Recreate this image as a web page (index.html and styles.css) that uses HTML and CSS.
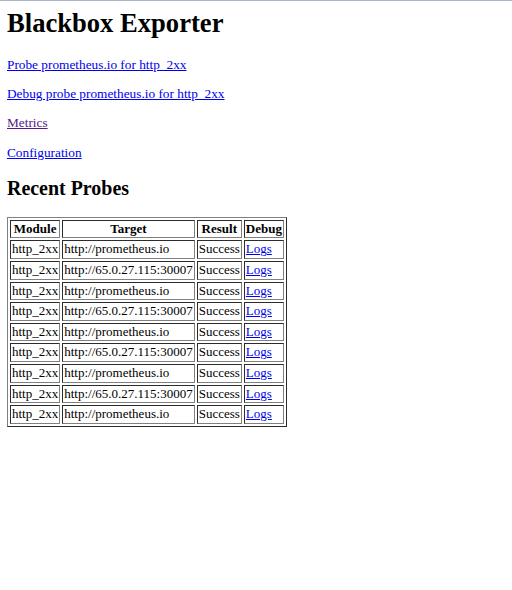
FILE: index.html
```html
<!DOCTYPE html>
<html>
<head>
<meta charset="utf-8">
<title>Blackbox Exporter</title>
<link rel="stylesheet" href="styles.css">
</head>
<body class="page">
<h1 class="title">Blackbox Exporter</h1>
<p class="nav"><a class="link" href="#probe">Probe prometheus.io for http_2xx</a></p>
<p class="nav"><a class="link" href="#debug">Debug probe prometheus.io for http_2xx</a></p>
<p class="nav"><a class="link visited" href="#metrics">Metrics</a></p>
<p class="nav"><a class="link" href="#config">Configuration</a></p>
<h2 class="subtitle">Recent Probes</h2>
<table class="probes" border="1">
<tr><th>Module</th><th>Target</th><th>Result</th><th>Debug</th></tr>
<tr><td>http_2xx</td><td>http://prometheus.io</td><td>Success</td><td><a class="link" href="#l1">Logs</a></td></tr>
<tr><td>http_2xx</td><td>http://65.0.27.115:30007</td><td>Success</td><td><a class="link" href="#l2">Logs</a></td></tr>
<tr><td>http_2xx</td><td>http://prometheus.io</td><td>Success</td><td><a class="link" href="#l3">Logs</a></td></tr>
<tr><td>http_2xx</td><td>http://65.0.27.115:30007</td><td>Success</td><td><a class="link" href="#l4">Logs</a></td></tr>
<tr><td>http_2xx</td><td>http://prometheus.io</td><td>Success</td><td><a class="link" href="#l5">Logs</a></td></tr>
<tr><td>http_2xx</td><td>http://65.0.27.115:30007</td><td>Success</td><td><a class="link" href="#l6">Logs</a></td></tr>
<tr><td>http_2xx</td><td>http://prometheus.io</td><td>Success</td><td><a class="link" href="#l7">Logs</a></td></tr>
<tr><td>http_2xx</td><td>http://65.0.27.115:30007</td><td>Success</td><td><a class="link" href="#l8">Logs</a></td></tr>
<tr><td>http_2xx</td><td>http://prometheus.io</td><td>Success</td><td><a class="link" href="#l9">Logs</a></td></tr>
</table>
</body>
</html>
```

FILE: styles.css
```css
html {
  border-top: 1px solid #aab4cc;
}
.page {
  margin: 7px;
  font-family: "Liberation Serif", serif;
  font-size: 13.3px;
  color: #000;
  background: #fff;
}
.title {
  margin-top: 0;
}
.probes {
  font-size: 13px;
  line-height: 14.6px;
}
.link {
  color: #0000ee;
}
.visited {
  color: #551a8b;
}
```
